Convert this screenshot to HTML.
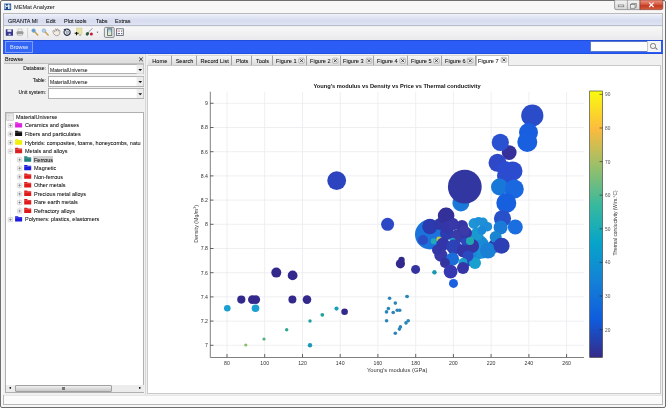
<!DOCTYPE html>
<html><head><meta charset="utf-8">
<style>
*{margin:0;padding:0;box-sizing:border-box}
html,body{width:666px;height:408px;overflow:hidden;background:#fff}
body{position:relative;font-family:"Liberation Sans",sans-serif;font-size:5.5px;color:#1a1a1a}
.a{position:absolute}
.plot{position:absolute;left:0;top:0}
.t{position:absolute;white-space:nowrap;line-height:8px;will-change:transform;-webkit-text-stroke-width:0.05px;color:#0a0a0a}
</style></head><body>
<!-- window frame -->
<div class="a" style="left:0;top:0;width:666px;height:408px;background:#f7f7f7;border:1px solid #6e6e6e;border-radius:2px"></div>
<!-- title -->
<div class="t" style="left:14px;top:3.2px;font-size:5.6px;color:#2a2a2a">MEMat Analyzer</div>
<!-- window buttons -->
<svg class="a" style="left:0;top:0" width="666" height="14" viewBox="0 0 666 14">
<defs><linearGradient id="wb" x1="0" y1="0" x2="0" y2="1"><stop offset="0" stop-color="#f6f6f6"/><stop offset="0.5" stop-color="#e6e6e6"/><stop offset="1" stop-color="#d6d6d6"/></linearGradient>
<linearGradient id="cb" x1="0" y1="0" x2="0" y2="1"><stop offset="0" stop-color="#ee9a88"/><stop offset="0.45" stop-color="#d65a44"/><stop offset="0.6" stop-color="#c23a22"/><stop offset="1" stop-color="#d8603c"/></linearGradient></defs>
<path d="M614.6 0 V8 Q614.6 9.6 616.2 9.6 H640 V0 Z" fill="url(#wb)" stroke="#7a7a7a" stroke-width="0.7"/>
<line x1="627.4" y1="0" x2="627.4" y2="9.6" stroke="#7a7a7a" stroke-width="0.6"/>
<path d="M640 0 V9.6 H661.2 Q662.8 9.6 662.8 8 V0 Z" fill="url(#cb)" stroke="#8a3a2a" stroke-width="0.7"/>
<rect x="618.2" y="5" width="5.6" height="1.8" fill="#f4f4f4" stroke="#666" stroke-width="0.6"/>
<rect x="631.8" y="3.6" width="4.4" height="3.6" fill="none" stroke="#666" stroke-width="0.6"/>
<rect x="630.6" y="4.6" width="4.4" height="3.6" fill="#eee" stroke="#666" stroke-width="0.6"/>
<path d="M649.2 2.6 L653.6 7 M653.6 2.6 L649.2 7" stroke="#fff" stroke-width="1.1"/>
</svg>
<!-- inner border -->
<div class="a" style="left:3px;top:13px;width:660px;height:392px;border:1px solid #b9b9b9;background:#f0f0f0"></div>
<!-- menubar -->
<div class="a" style="left:4px;top:14px;width:658px;height:12px;background:linear-gradient(#eef1fa,#d7dcef 55%,#dfe4f3);border-bottom:1px solid #b8bccc"></div>
<div class="t" style="left:8px;top:16.5px">GRANTA MI</div>
<div class="t" style="left:45.8px;top:16.5px">Edit</div>
<div class="t" style="left:63.5px;top:16.5px">Plot tools</div>
<div class="t" style="left:95.6px;top:16.5px">Tabs</div>
<div class="t" style="left:114.6px;top:16.5px">Extras</div>
<!-- toolbar -->
<div class="a" style="left:4px;top:27px;width:658px;height:13px;background:linear-gradient(#f7f7f7,#eaeaee)"></div>
<svg class="a" style="left:0;top:0" width="130" height="40" viewBox="0 0 130 40">
<!-- save -->
<rect x="5.8" y="29.2" width="7.2" height="6.6" rx="0.6" fill="#35388c"/>
<rect x="7.4" y="29.4" width="4" height="2.4" fill="#e8e8f4"/>
<rect x="8.6" y="33.6" width="2" height="1.6" fill="#c8c8e0"/>
<!-- print -->
<rect x="18" y="29" width="4" height="2.5" fill="#f4f4f4" stroke="#999" stroke-width="0.4"/>
<rect x="16.6" y="31.2" width="6.8" height="3.2" rx="1" fill="#9a9a9a"/>
<rect x="17.6" y="33.8" width="4.8" height="1.6" fill="#d8d8d8" stroke="#888" stroke-width="0.3"/>
<line x1="27.6" y1="28" x2="27.6" y2="38" stroke="#c4c4c4" stroke-width="0.7"/>
<!-- zoom in -->
<line x1="34.5" y1="31.5" x2="38.2" y2="35.4" stroke="#c8a040" stroke-width="1.4"/>
<circle cx="33.6" cy="30.6" r="1.8" fill="#5aa0e0" stroke="#7890a8" stroke-width="0.5"/>
<!-- zoom out -->
<line x1="44.8" y1="31.5" x2="48.6" y2="35.4" stroke="#c8a040" stroke-width="1.4"/>
<circle cx="43.9" cy="30.6" r="1.9" fill="#a8d0f0" stroke="#8aa0b8" stroke-width="0.5"/>
<!-- pan hand -->
<path d="M53.4 33.2 L52.8 31.2 Q52.9 30.2 54 30.7 L54.9 31.8 L55 29.4 Q55.6 28.5 56.3 29.3 L56.6 31 L57 29 Q57.8 28.4 58.3 29.3 L58.4 31.3 L59.1 30.3 Q59.9 30 60 30.9 L59.7 33.4 Q59.2 35.8 56.6 35.8 Q54.5 35.8 53.4 33.2 Z" fill="#f4ece2" stroke="#707070" stroke-width="0.55"/>
<!-- rotate -->
<path d="M64.6 30.4 A3.1 3.1 0 1 0 66.4 29.2" fill="none" stroke="#2a3450" stroke-width="1.15"/>
<path d="M63.4 29.2 L66.6 28.4 L65.6 31.2 Z" fill="#2a3450"/>
<rect x="66" y="31" width="2.6" height="2.4" fill="#b8bcc8" stroke="#606878" stroke-width="0.35"/>
<!-- data cursor -->
<rect x="76.6" y="28" width="5.4" height="6.2" fill="#e8e4a8" stroke="#c8c080" stroke-width="0.4"/>
<path d="M74.6 33.3 H78.6 M76.5 32 V35.2" stroke="#111" stroke-width="1.1"/>
<path d="M79.2 35.2 H81" stroke="#444" stroke-width="0.5"/>
<!-- brush -->
<line x1="88.6" y1="31.8" x2="92.6" y2="28.4" stroke="#8890a8" stroke-width="0.9"/>
<ellipse cx="87.4" cy="33.8" rx="1.5" ry="1.9" transform="rotate(40 87.4 33.8)" fill="#2e5a38"/>
<circle cx="91.4" cy="34" r="1.5" fill="#c81838"/>
<path d="M96.6 31.8 L98.4 31.8 L97.5 33 Z" fill="#444"/>
<!-- toggle -->
<defs><linearGradient id="tg" x1="0" y1="0" x2="0" y2="1"><stop offset="0" stop-color="#88b8e0"/><stop offset="0.6" stop-color="#d8e8d8"/><stop offset="1" stop-color="#f0f0c0"/></linearGradient></defs>
<rect x="104.4" y="27.4" width="9.8" height="10" rx="1.2" fill="#e6ecf2" stroke="#707070" stroke-width="0.8"/>
<rect x="107.6" y="28.8" width="4.2" height="6.6" fill="url(#tg)" stroke="#4e5e56" stroke-width="0.8"/>
<!-- legend -->
<rect x="116.5" y="28.8" width="6.8" height="6.6" fill="#fafafa" stroke="#585e66" stroke-width="0.8"/>
<rect x="117.6" y="30.6" width="2.4" height="0.9" fill="#c86078"/><rect x="121" y="30.6" width="1.2" height="0.9" fill="#404858"/>
<rect x="117.6" y="33.2" width="2.4" height="0.9" fill="#4050a8"/><rect x="121" y="33.2" width="1.2" height="0.9" fill="#404878"/>
<!-- app icon -->
<rect x="4.2" y="3.6" width="6.9" height="6.5" fill="#1a4c94"/>
<path d="M5.2 9 L5.2 4.6 L6.9 7 L8.5 4.6 L8.5 9 M9.8 4.6 L9.8 9" fill="none" stroke="#fff" stroke-width="0.9"/>
</svg>
<!-- blue bar -->
<div class="a" style="left:3px;top:39.5px;width:660px;height:14.3px;background:#2b5cf5;border-top:1px solid #1f4cd8;border-bottom:1px solid #2250e0"></div>
<div class="a" style="left:5px;top:41px;width:27.5px;height:11.5px;background:#3366f6;border:0.8px solid #7f9ef7"></div>
<div class="t" style="left:9.6px;top:43.2px;color:#d4e0ff">Browse</div>
<!-- search -->
<div class="a" style="left:590px;top:40.8px;width:71px;height:11.7px;background:#fff;border:0.8px solid #5a78c8"></div>
<div class="a" style="left:646.5px;top:41.3px;width:14px;height:10.7px;background:#f4f4f4;border-left:0.6px solid #c8c8c8"></div>
<div class="a" style="left:650px;top:43px;width:5.5px;height:5.5px;border:0.8px solid #777;border-radius:50%"></div>
<div class="a" style="left:654.5px;top:48px;width:2.5px;height:0.9px;background:#777;transform:rotate(45deg)"></div>
<!-- left panel -->
<div class="a" style="left:3px;top:54px;width:143px;height:340.5px;background:#f0f0f0;border-right:0.8px solid #d8d8d8"></div>
<div class="a" style="left:4px;top:54px;width:140px;height:9.5px;background:linear-gradient(#eaeaea,#dcdcdc);border-bottom:0.6px solid #c0c0c0"></div>
<div class="t" style="left:5px;top:54.7px">Browse</div>
<!-- combos -->
<div class="t" style="left:16px;top:63.9px;width:30px;text-align:right;font-size:5px">Database:</div>
<div class="t" style="left:16px;top:75.9px;width:30px;text-align:right;font-size:5px">Table:</div>
<div class="t" style="left:6px;top:87.6px;width:40px;text-align:right;font-size:5px">Unit system:</div>
<div class="a" style="left:48px;top:64px;width:96px;height:10.4px;background:#fff;border:0.6px solid #b0b0b0"></div>
<div class="t" style="left:49.8px;top:66.1px;font-size:5px;color:#222">MaterialUniverse</div>
<div class="a" style="left:48px;top:76.2px;width:96px;height:10.4px;background:#fff;border:0.6px solid #b0b0b0"></div>
<div class="t" style="left:49.8px;top:78.2px;font-size:5px;color:#222">MaterialUniverse</div>
<div class="a" style="left:48px;top:88.4px;width:96px;height:10.2px;background:#fff;border:0.6px solid #b0b0b0"></div>
<svg class="a" style="left:0;top:0" width="150" height="100" viewBox="0 0 150 100">
<rect x="136.6" y="64.6" width="6.8" height="9.2" fill="#ececec"/>
<rect x="136.6" y="76.8" width="6.8" height="9.2" fill="#ececec"/>
<rect x="136.6" y="89" width="6.8" height="9" fill="#ececec"/>
<path d="M138.3 68.9 h3.8 l-1.9 2 z M138.3 81.1 h3.8 l-1.9 2 z M138.3 93.2 h3.8 l-1.9 2 z" fill="#111"/>
<path d="M139.2 57.5 L142.8 61.1 M142.8 57.5 L139.2 61.1" stroke="#222" stroke-width="0.9"/>
</svg>
<!-- tree -->
<div class="a" style="left:5px;top:111.9px;width:139.4px;height:281px;background:#fff;border:0.7px solid #b0b0b0"></div>
<svg class="a" style="left:0;top:0" width="150" height="240" viewBox="0 0 150 240"><path d="M10.4 129 V219.6 M19.6 161.8 V211.1" stroke="#d0d0d0" stroke-width="0.5" stroke-dasharray="0.6 0.6"/><rect x="6.3" y="113.60" width="7" height="6.6" fill="#ececec" stroke="#b0b0b0" stroke-width="0.5"/><path d="M6.3 115.60 H13.3 M8.8 113.60 V120.20" stroke="#c8c8c8" stroke-width="0.4"/><rect x="8.20" y="123.45" width="4.4" height="4.2" rx="0.6" fill="#fafafa" stroke="#b8b8b8" stroke-width="0.5"/><path d="M9.10 125.55 H11.70" stroke="#505050" stroke-width="0.5"/><path d="M10.40 124.25 V126.85" stroke="#505050" stroke-width="0.5"/><path d="M15.10 122.15 h2.8 l0.8 0.8 h3.4 v4.6 h-7 z" fill="#e020e0"/><path d="M15.10 123.75 h7" stroke="rgba(255,255,255,0.35)" stroke-width="0.6"/><rect x="8.20" y="132.00" width="4.4" height="4.2" rx="0.6" fill="#fafafa" stroke="#b8b8b8" stroke-width="0.5"/><path d="M9.10 134.10 H11.70" stroke="#505050" stroke-width="0.5"/><path d="M10.40 132.80 V135.40" stroke="#505050" stroke-width="0.5"/><path d="M15.10 130.70 h2.8 l0.8 0.8 h3.4 v4.6 h-7 z" fill="#101010"/><path d="M15.10 132.30 h7" stroke="rgba(255,255,255,0.35)" stroke-width="0.6"/><rect x="8.20" y="140.55" width="4.4" height="4.2" rx="0.6" fill="#fafafa" stroke="#b8b8b8" stroke-width="0.5"/><path d="M9.10 142.65 H11.70" stroke="#505050" stroke-width="0.5"/><path d="M10.40 141.35 V143.95" stroke="#505050" stroke-width="0.5"/><path d="M15.10 139.25 h2.8 l0.8 0.8 h3.4 v4.6 h-7 z" fill="#f0f000"/><path d="M15.10 140.85 h7" stroke="rgba(255,255,255,0.35)" stroke-width="0.6"/><rect x="8.20" y="149.10" width="4.4" height="4.2" rx="0.6" fill="#fafafa" stroke="#b8b8b8" stroke-width="0.5"/><path d="M9.10 151.20 H11.70" stroke="#505050" stroke-width="0.5"/><path d="M15.10 147.80 h2.8 l0.8 0.8 h3.4 v4.6 h-7 z" fill="#d82020"/><path d="M15.10 149.40 h7" stroke="rgba(255,255,255,0.35)" stroke-width="0.6"/><rect x="17.40" y="157.65" width="4.4" height="4.2" rx="0.6" fill="#fafafa" stroke="#b8b8b8" stroke-width="0.5"/><path d="M18.30 159.75 H20.90" stroke="#505050" stroke-width="0.5"/><path d="M19.60 158.45 V161.05" stroke="#505050" stroke-width="0.5"/><path d="M24.20 156.35 h2.8 l0.8 0.8 h3.4 v4.6 h-7 z" fill="#208080"/><path d="M24.20 157.95 h7" stroke="rgba(255,255,255,0.35)" stroke-width="0.6"/><rect x="17.40" y="166.20" width="4.4" height="4.2" rx="0.6" fill="#fafafa" stroke="#b8b8b8" stroke-width="0.5"/><path d="M18.30 168.30 H20.90" stroke="#505050" stroke-width="0.5"/><path d="M19.60 167.00 V169.60" stroke="#505050" stroke-width="0.5"/><path d="M24.20 164.90 h2.8 l0.8 0.8 h3.4 v4.6 h-7 z" fill="#1a1ae0"/><path d="M24.20 166.50 h7" stroke="rgba(255,255,255,0.35)" stroke-width="0.6"/><rect x="17.40" y="174.75" width="4.4" height="4.2" rx="0.6" fill="#fafafa" stroke="#b8b8b8" stroke-width="0.5"/><path d="M18.30 176.85 H20.90" stroke="#505050" stroke-width="0.5"/><path d="M19.60 175.55 V178.15" stroke="#505050" stroke-width="0.5"/><path d="M24.20 173.45 h2.8 l0.8 0.8 h3.4 v4.6 h-7 z" fill="#e01818"/><path d="M24.20 175.05 h7" stroke="rgba(255,255,255,0.35)" stroke-width="0.6"/><rect x="17.40" y="183.30" width="4.4" height="4.2" rx="0.6" fill="#fafafa" stroke="#b8b8b8" stroke-width="0.5"/><path d="M18.30 185.40 H20.90" stroke="#505050" stroke-width="0.5"/><path d="M19.60 184.10 V186.70" stroke="#505050" stroke-width="0.5"/><path d="M24.20 182.00 h2.8 l0.8 0.8 h3.4 v4.6 h-7 z" fill="#e01818"/><path d="M24.20 183.60 h7" stroke="rgba(255,255,255,0.35)" stroke-width="0.6"/><rect x="17.40" y="191.85" width="4.4" height="4.2" rx="0.6" fill="#fafafa" stroke="#b8b8b8" stroke-width="0.5"/><path d="M18.30 193.95 H20.90" stroke="#505050" stroke-width="0.5"/><path d="M19.60 192.65 V195.25" stroke="#505050" stroke-width="0.5"/><path d="M24.20 190.55 h2.8 l0.8 0.8 h3.4 v4.6 h-7 z" fill="#e01818"/><path d="M24.20 192.15 h7" stroke="rgba(255,255,255,0.35)" stroke-width="0.6"/><rect x="17.40" y="200.40" width="4.4" height="4.2" rx="0.6" fill="#fafafa" stroke="#b8b8b8" stroke-width="0.5"/><path d="M18.30 202.50 H20.90" stroke="#505050" stroke-width="0.5"/><path d="M19.60 201.20 V203.80" stroke="#505050" stroke-width="0.5"/><path d="M24.20 199.10 h2.8 l0.8 0.8 h3.4 v4.6 h-7 z" fill="#e01818"/><path d="M24.20 200.70 h7" stroke="rgba(255,255,255,0.35)" stroke-width="0.6"/><rect x="17.40" y="208.95" width="4.4" height="4.2" rx="0.6" fill="#fafafa" stroke="#b8b8b8" stroke-width="0.5"/><path d="M18.30 211.05 H20.90" stroke="#505050" stroke-width="0.5"/><path d="M19.60 209.75 V212.35" stroke="#505050" stroke-width="0.5"/><path d="M24.20 207.65 h2.8 l0.8 0.8 h3.4 v4.6 h-7 z" fill="#e01818"/><path d="M24.20 209.25 h7" stroke="rgba(255,255,255,0.35)" stroke-width="0.6"/><rect x="8.20" y="217.50" width="4.4" height="4.2" rx="0.6" fill="#fafafa" stroke="#b8b8b8" stroke-width="0.5"/><path d="M9.10 219.60 H11.70" stroke="#505050" stroke-width="0.5"/><path d="M10.40 218.30 V220.90" stroke="#505050" stroke-width="0.5"/><path d="M15.10 216.20 h2.8 l0.8 0.8 h3.4 v4.6 h-7 z" fill="#1a1ae0"/><path d="M15.10 217.80 h7" stroke="rgba(255,255,255,0.35)" stroke-width="0.6"/></svg><div class="t" style="left:16px;top:112.8px">MaterialUniverse</div><div class="t" style="left:24.6px;top:121.3px">Ceramics and glasses</div><div class="t" style="left:24.6px;top:129.9px">Fibers and particulates</div><div class="t" style="left:24.6px;top:138.5px">Hybrids: composites, foams, honeycombs, natu</div><div class="t" style="left:24.6px;top:147.0px">Metals and alloys</div><div class="a" style="left:33.0px;top:156.1px;width:20px;height:7.4px;background:#d2d2d2"></div><div class="t" style="left:34.0px;top:155.6px">Ferrous</div><div class="t" style="left:34.0px;top:164.1px">Magnetic</div><div class="t" style="left:34.0px;top:172.7px">Non-ferrous</div><div class="t" style="left:34.0px;top:181.2px">Other metals</div><div class="t" style="left:34.0px;top:189.8px">Precious metal alloys</div><div class="t" style="left:34.0px;top:198.3px">Rare earth metals</div><div class="t" style="left:34.0px;top:206.9px">Refractory alloys</div><div class="t" style="left:24.6px;top:215.4px">Polymers: plastics, elastomers</div>
<!-- tree scrollbar -->
<div class="a" style="left:6px;top:384.5px;width:137.5px;height:7.5px;background:#ececec"></div>
<div class="a" style="left:14.5px;top:385px;width:97px;height:6.8px;background:linear-gradient(#f0f0f0,#c8c8c8);border:0.6px solid #a0a0a0;border-radius:1px"></div>
<div class="a" style="left:61.5px;top:386.8px;width:3.2px;height:3.2px;background:repeating-linear-gradient(90deg,#777 0 0.6px,transparent 0.6px 1.1px)"></div>
<div class="t" style="left:8.5px;top:384px;font-size:4px">◂</div>
<div class="t" style="left:138.5px;top:384px;font-size:4px">▸</div>
<!-- tabs -->
<div class="a" style="left:147.3px;top:65px;width:514px;height:329px;background:#fff;border:0.7px solid #cacaca"></div>
<div class="a" style="left:4px;top:394.6px;width:658px;height:9.6px;background:#fbfbfb;border-top:0.6px solid #e6e6e6"></div>
<div class="a" style="left:148.0px;top:55.4px;width:23.6px;height:9.6px;background:linear-gradient(#f6f6f6,#dcdcdc);border-top:0.6px solid #d8d8d8;border-right:0.8px solid #a4a4a4"></div><div class="t" style="left:148.0px;top:57.4px;width:23.6px;text-align:center;font-size:5.6px">Home</div><div class="a" style="left:171.6px;top:55.4px;width:25.0px;height:9.6px;background:linear-gradient(#f6f6f6,#dcdcdc);border-top:0.6px solid #d8d8d8;border-right:0.8px solid #a4a4a4"></div><div class="t" style="left:171.6px;top:57.4px;width:25.0px;text-align:center;font-size:5.6px">Search</div><div class="a" style="left:196.6px;top:55.4px;width:35.2px;height:9.6px;background:linear-gradient(#f6f6f6,#dcdcdc);border-top:0.6px solid #d8d8d8;border-right:0.8px solid #a4a4a4"></div><div class="t" style="left:196.6px;top:57.4px;width:35.2px;text-align:center;font-size:5.6px">Record List</div><div class="a" style="left:231.8px;top:55.4px;width:20.4px;height:9.6px;background:linear-gradient(#f6f6f6,#dcdcdc);border-top:0.6px solid #d8d8d8;border-right:0.8px solid #a4a4a4"></div><div class="t" style="left:231.8px;top:57.4px;width:20.4px;text-align:center;font-size:5.6px">Plots</div><div class="a" style="left:252.2px;top:55.4px;width:21.0px;height:9.6px;background:linear-gradient(#f6f6f6,#dcdcdc);border-top:0.6px solid #d8d8d8;border-right:0.8px solid #a4a4a4"></div><div class="t" style="left:252.2px;top:57.4px;width:21.0px;text-align:center;font-size:5.6px">Tools</div><div class="a" style="left:273.2px;top:55.4px;width:33.7px;height:9.6px;background:linear-gradient(#f6f6f6,#dcdcdc);border-top:0.6px solid #d8d8d8;border-right:0.8px solid #a4a4a4"></div><div class="t" style="left:275.8px;top:57.4px;font-size:5.6px">Figure 1</div><div class="a" style="left:306.9px;top:55.4px;width:33.7px;height:9.6px;background:linear-gradient(#f6f6f6,#dcdcdc);border-top:0.6px solid #d8d8d8;border-right:0.8px solid #a4a4a4"></div><div class="t" style="left:309.5px;top:57.4px;font-size:5.6px">Figure 2</div><div class="a" style="left:340.7px;top:55.4px;width:33.7px;height:9.6px;background:linear-gradient(#f6f6f6,#dcdcdc);border-top:0.6px solid #d8d8d8;border-right:0.8px solid #a4a4a4"></div><div class="t" style="left:343.3px;top:57.4px;font-size:5.6px">Figure 3</div><div class="a" style="left:374.4px;top:55.4px;width:33.7px;height:9.6px;background:linear-gradient(#f6f6f6,#dcdcdc);border-top:0.6px solid #d8d8d8;border-right:0.8px solid #a4a4a4"></div><div class="t" style="left:377.0px;top:57.4px;font-size:5.6px">Figure 4</div><div class="a" style="left:408.1px;top:55.4px;width:33.7px;height:9.6px;background:linear-gradient(#f6f6f6,#dcdcdc);border-top:0.6px solid #d8d8d8;border-right:0.8px solid #a4a4a4"></div><div class="t" style="left:410.7px;top:57.4px;font-size:5.6px">Figure 5</div><div class="a" style="left:441.9px;top:55.4px;width:33.7px;height:9.6px;background:linear-gradient(#f6f6f6,#dcdcdc);border-top:0.6px solid #d8d8d8;border-right:0.8px solid #a4a4a4"></div><div class="t" style="left:444.5px;top:57.4px;font-size:5.6px">Figure 6</div><div class="a" style="left:475.6px;top:54.6px;width:33.7px;height:11px;background:#fff;border:0.7px solid #c0c0c0;border-bottom:none"></div><div class="t" style="left:478.2px;top:56.6px;font-size:5.6px">Figure 7</div><svg class="a" style="left:0;top:0" width="666" height="70" viewBox="0 0 666 70"><rect x="298.73" y="58.10" width="5.6" height="5.2" rx="1" fill="#f4f4f4" stroke="#9a9a9a" stroke-width="0.6"/><path d="M300.03 59.20 L303.03 62.20 M303.03 59.20 L300.03 62.20" stroke="#1a1a1a" stroke-width="0.8"/><rect x="332.46" y="58.10" width="5.6" height="5.2" rx="1" fill="#f4f4f4" stroke="#9a9a9a" stroke-width="0.6"/><path d="M333.76 59.20 L336.76 62.20 M336.76 59.20 L333.76 62.20" stroke="#1a1a1a" stroke-width="0.8"/><rect x="366.19" y="58.10" width="5.6" height="5.2" rx="1" fill="#f4f4f4" stroke="#9a9a9a" stroke-width="0.6"/><path d="M367.49 59.20 L370.49 62.20 M370.49 59.20 L367.49 62.20" stroke="#1a1a1a" stroke-width="0.8"/><rect x="399.92" y="58.10" width="5.6" height="5.2" rx="1" fill="#f4f4f4" stroke="#9a9a9a" stroke-width="0.6"/><path d="M401.22 59.20 L404.22 62.20 M404.22 59.20 L401.22 62.20" stroke="#1a1a1a" stroke-width="0.8"/><rect x="433.65" y="58.10" width="5.6" height="5.2" rx="1" fill="#f4f4f4" stroke="#9a9a9a" stroke-width="0.6"/><path d="M434.95 59.20 L437.95 62.20 M437.95 59.20 L434.95 62.20" stroke="#1a1a1a" stroke-width="0.8"/><rect x="467.38" y="58.10" width="5.6" height="5.2" rx="1" fill="#f4f4f4" stroke="#9a9a9a" stroke-width="0.6"/><path d="M468.68 59.20 L471.68 62.20 M471.68 59.20 L468.68 62.20" stroke="#1a1a1a" stroke-width="0.8"/><rect x="501.11" y="57.30" width="5.6" height="5.2" rx="1" fill="#f4f4f4" stroke="#9a9a9a" stroke-width="0.6"/><path d="M502.41 58.40 L505.41 61.40 M505.41 58.40 L502.41 61.40" stroke="#1a1a1a" stroke-width="0.8"/></svg>
<svg class="plot" width="666" height="408" viewBox="0 0 666 408">
<defs><linearGradient id="parula" x1="0" y1="1" x2="0" y2="0">
<stop offset="0" stop-color="#352a87"/><stop offset="0.143" stop-color="#0f5cdd"/><stop offset="0.286" stop-color="#1481d6"/>
<stop offset="0.429" stop-color="#06a4ca"/><stop offset="0.571" stop-color="#37b99e"/><stop offset="0.714" stop-color="#97bf6b"/>
<stop offset="0.857" stop-color="#fcbb3e"/><stop offset="1" stop-color="#f9fb0e"/></linearGradient></defs>
<g stroke="#eaeaee" stroke-width="0.75"><line x1="227.0" y1="91.7" x2="227.0" y2="357.5" /><line x1="264.7" y1="91.7" x2="264.7" y2="357.5" /><line x1="302.5" y1="91.7" x2="302.5" y2="357.5" /><line x1="340.2" y1="91.7" x2="340.2" y2="357.5" /><line x1="377.9" y1="91.7" x2="377.9" y2="357.5" /><line x1="415.7" y1="91.7" x2="415.7" y2="357.5" /><line x1="453.4" y1="91.7" x2="453.4" y2="357.5" /><line x1="491.1" y1="91.7" x2="491.1" y2="357.5" /><line x1="528.9" y1="91.7" x2="528.9" y2="357.5" /><line x1="566.6" y1="91.7" x2="566.6" y2="357.5" /><line x1="210" y1="345.3" x2="584" y2="345.3" /><line x1="210" y1="321.1" x2="584" y2="321.1" /><line x1="210" y1="296.9" x2="584" y2="296.9" /><line x1="210" y1="272.7" x2="584" y2="272.7" /><line x1="210" y1="248.5" x2="584" y2="248.5" /><line x1="210" y1="224.3" x2="584" y2="224.3" /><line x1="210" y1="200.1" x2="584" y2="200.1" /><line x1="210" y1="175.9" x2="584" y2="175.9" /><line x1="210" y1="151.7" x2="584" y2="151.7" /><line x1="210" y1="127.5" x2="584" y2="127.5" /><line x1="210" y1="103.3" x2="584" y2="103.3" /></g>
<circle cx="227.3" cy="308.3" r="3.3" fill="#1aa0d2"/><circle cx="241.3" cy="299.6" r="4.1" fill="#33298c"/><circle cx="252.3" cy="299.6" r="4.3" fill="#33298c"/><circle cx="255.8" cy="299.6" r="4.3" fill="#33298c"/><circle cx="255.5" cy="308.3" r="3.8" fill="#1aa0d2"/><circle cx="292.4" cy="299.6" r="4.0" fill="#33298c"/><circle cx="307.0" cy="299.6" r="4.3" fill="#33298c"/><circle cx="245.8" cy="345.0" r="1.6" fill="#8cbc62"/><circle cx="264.0" cy="339.0" r="1.6" fill="#4fae7a"/><circle cx="286.7" cy="329.8" r="1.7" fill="#2fa88c"/><circle cx="310.0" cy="321.0" r="1.7" fill="#1fa0a0"/><circle cx="310.0" cy="345.2" r="2.2" fill="#1a9ab8"/><circle cx="322.3" cy="314.8" r="1.9" fill="#22a39a"/><circle cx="336.5" cy="308.6" r="2.1" fill="#18a0b8"/><circle cx="344.6" cy="311.8" r="3.3" fill="#33298c"/><circle cx="276.3" cy="272.6" r="5.0" fill="#33298c"/><circle cx="292.6" cy="275.4" r="4.9" fill="#33298c"/><circle cx="336.7" cy="180.6" r="9.4" fill="#2c44c0"/><circle cx="387.6" cy="224.3" r="6.5" fill="#2c48c4"/><circle cx="401.5" cy="260.0" r="3.2" fill="#33298c"/><circle cx="400.4" cy="263.8" r="4.6" fill="#33298c"/><circle cx="415.6" cy="269.4" r="4.5" fill="#3533a0"/><circle cx="434.6" cy="272.4" r="2.1" fill="#1a9ab0"/><circle cx="389.6" cy="298.2" r="1.8" fill="#2a86b8"/><circle cx="407.2" cy="296.5" r="1.8" fill="#2a86b8"/><circle cx="395.3" cy="303.1" r="1.8" fill="#2a86b8"/><circle cx="388.4" cy="308.5" r="1.8" fill="#2a86b8"/><circle cx="386.5" cy="311.9" r="1.8" fill="#2a86b8"/><circle cx="393.2" cy="312.5" r="1.8" fill="#2a86b8"/><circle cx="397.2" cy="310.3" r="1.8" fill="#2a86b8"/><circle cx="399.7" cy="310.3" r="1.8" fill="#2a86b8"/><circle cx="386.6" cy="320.7" r="1.8" fill="#2a86b8"/><circle cx="406.0" cy="322.9" r="1.8" fill="#2a86b8"/><circle cx="408.2" cy="320.7" r="1.8" fill="#2a86b8"/><circle cx="400.4" cy="326.9" r="1.8" fill="#2a86b8"/><circle cx="399.4" cy="329.1" r="1.8" fill="#2a86b8"/><circle cx="395.3" cy="333.2" r="1.8" fill="#2a86b8"/><circle cx="406.7" cy="296.5" r="1.4" fill="#2a86b8"/><circle cx="430.0" cy="234.5" r="15.0" fill="#1a74dc"/><circle cx="477.0" cy="247.0" r="12.5" fill="#1a8ad6"/><circle cx="477.0" cy="234.0" r="6.5" fill="#1a98d0"/><circle cx="429.9" cy="226.5" r="7.7" fill="#2c3ab0"/><circle cx="423.0" cy="240.0" r="5.0" fill="#2a4cc4"/><circle cx="433.7" cy="241.3" r="3.0" fill="#22a8b8"/><circle cx="439.0" cy="239.0" r="2.6" fill="#c8c848"/><circle cx="440.0" cy="224.0" r="6.0" fill="#3038a8"/><circle cx="446.1" cy="215.8" r="8.3" fill="#35309a"/><circle cx="452.6" cy="223.7" r="6.0" fill="#3436a8"/><circle cx="447.0" cy="233.0" r="7.0" fill="#2c3cb0"/><circle cx="443.1" cy="244.1" r="6.6" fill="#3236a8"/><circle cx="440.9" cy="255.2" r="6.6" fill="#3838a8"/><circle cx="458.0" cy="236.0" r="7.0" fill="#3a3aa8"/><circle cx="452.6" cy="240.8" r="3.0" fill="#1aa0c0"/><circle cx="466.0" cy="233.0" r="6.0" fill="#3535a5"/><circle cx="454.0" cy="247.0" r="7.5" fill="#2e42b8"/><circle cx="452.5" cy="259.0" r="6.6" fill="#1a6cd8"/><circle cx="463.4" cy="250.7" r="6.7" fill="#3236a8"/><circle cx="445.0" cy="263.0" r="5.0" fill="#3434a0"/><circle cx="462.0" cy="226.0" r="6.0" fill="#3535a5"/><circle cx="447.0" cy="227.0" r="6.0" fill="#3436a8"/><circle cx="453.4" cy="224.6" r="5.4" fill="#3838a8"/><circle cx="464.2" cy="230.5" r="5.4" fill="#3a3aa8"/><circle cx="437.0" cy="250.0" r="5.0" fill="#3436a8"/><circle cx="467.0" cy="262.0" r="5.0" fill="#2c48c0"/><circle cx="474.0" cy="223.5" r="5.4" fill="#1e94d6"/><circle cx="478.5" cy="221.0" r="4.0" fill="#1e90d8"/><circle cx="483.0" cy="222.3" r="4.8" fill="#1e90d8"/><circle cx="487.4" cy="226.7" r="4.8" fill="#1e8cd8"/><circle cx="482.8" cy="251.8" r="6.6" fill="#1a90d8"/><circle cx="475.0" cy="263.0" r="6.0" fill="#18a0d0"/><circle cx="472.0" cy="246.0" r="7.0" fill="#3535a5"/><circle cx="468.0" cy="256.0" r="5.5" fill="#2a48c0"/><circle cx="463.0" cy="262.5" r="4.5" fill="#1aa0c8"/><circle cx="463.0" cy="268.0" r="6.0" fill="#3535a8"/><circle cx="450.6" cy="271.7" r="6.9" fill="#3538b0"/><circle cx="453.5" cy="283.4" r="4.5" fill="#1a60e0"/><circle cx="434.3" cy="272.3" r="2.0" fill="#1a9ab0"/><circle cx="465.0" cy="241.5" r="4.0" fill="#2a48c0"/><circle cx="470.0" cy="241.0" r="4.0" fill="#20a8b0"/><circle cx="495.2" cy="245.7" r="7.0" fill="#2a3db0"/><circle cx="482.0" cy="230.0" r="4.5" fill="#1a8ad8"/><circle cx="488.0" cy="250.6" r="8.0" fill="#1a80d5"/><circle cx="509.2" cy="152.6" r="7.4" fill="#35309a"/><circle cx="500.3" cy="142.4" r="8.6" fill="#2a52d0"/><circle cx="497.5" cy="162.8" r="9.0" fill="#2e48c8"/><circle cx="505.0" cy="169.0" r="8.0" fill="#2c4cd0"/><circle cx="505.0" cy="176.0" r="8.0" fill="#2c4cd0"/><circle cx="513.0" cy="171.0" r="9.5" fill="#2c4cd0"/><circle cx="499.5" cy="187.0" r="8.5" fill="#1878d8"/><circle cx="514.3" cy="189.0" r="9.5" fill="#1a68e0"/><circle cx="506.3" cy="203.0" r="10.0" fill="#1660e0"/><circle cx="502.5" cy="218.5" r="8.6" fill="#2850c8"/><circle cx="515.3" cy="227.0" r="7.5" fill="#1a6ee0"/><circle cx="500.6" cy="227.5" r="7.0" fill="#1a7ad8"/><circle cx="495.7" cy="236.9" r="6.0" fill="#1a85d0"/><circle cx="501.6" cy="245.7" r="8.0" fill="#2c3fb5"/><circle cx="532.3" cy="115.5" r="11.1" fill="#2a4cc8"/><circle cx="528.5" cy="132.5" r="9.5" fill="#1a5ee0"/><circle cx="527.3" cy="142.0" r="10.0" fill="#1860e0"/><circle cx="460.9" cy="203.0" r="8.5" fill="#1a78d8"/><circle cx="464.8" cy="186.7" r="16.9" fill="#3236a0"/><circle cx="446.3" cy="214.2" r="6.5" fill="#33309a"/>
<g stroke="#262626" stroke-width="0.7"><line x1="227.0" y1="357.5" x2="227.0" y2="354" /><line x1="264.7" y1="357.5" x2="264.7" y2="354" /><line x1="302.5" y1="357.5" x2="302.5" y2="354" /><line x1="340.2" y1="357.5" x2="340.2" y2="354" /><line x1="377.9" y1="357.5" x2="377.9" y2="354" /><line x1="415.7" y1="357.5" x2="415.7" y2="354" /><line x1="453.4" y1="357.5" x2="453.4" y2="354" /><line x1="491.1" y1="357.5" x2="491.1" y2="354" /><line x1="528.9" y1="357.5" x2="528.9" y2="354" /><line x1="566.6" y1="357.5" x2="566.6" y2="354" /><line x1="210" y1="345.3" x2="213.5" y2="345.3" /><line x1="210" y1="321.1" x2="213.5" y2="321.1" /><line x1="210" y1="296.9" x2="213.5" y2="296.9" /><line x1="210" y1="272.7" x2="213.5" y2="272.7" /><line x1="210" y1="248.5" x2="213.5" y2="248.5" /><line x1="210" y1="224.3" x2="213.5" y2="224.3" /><line x1="210" y1="200.1" x2="213.5" y2="200.1" /><line x1="210" y1="175.9" x2="213.5" y2="175.9" /><line x1="210" y1="151.7" x2="213.5" y2="151.7" /><line x1="210" y1="127.5" x2="213.5" y2="127.5" /><line x1="210" y1="103.3" x2="213.5" y2="103.3" /></g>
<line x1="210.3" y1="91.7" x2="210.3" y2="357.5" stroke="#606060" stroke-width="0.8"/>
<line x1="210.3" y1="357.5" x2="584" y2="357.5" stroke="#606060" stroke-width="0.8"/>
<g font-family="Liberation Sans" font-size="5.2" fill="#333"><text x="227.0" y="365" text-anchor="middle">80</text><text x="264.7" y="365" text-anchor="middle">100</text><text x="302.5" y="365" text-anchor="middle">120</text><text x="340.2" y="365" text-anchor="middle">140</text><text x="377.9" y="365" text-anchor="middle">160</text><text x="415.7" y="365" text-anchor="middle">180</text><text x="453.4" y="365" text-anchor="middle">200</text><text x="491.1" y="365" text-anchor="middle">220</text><text x="528.9" y="365" text-anchor="middle">240</text><text x="566.6" y="365" text-anchor="middle">260</text><text x="208" y="347.2" text-anchor="end">7</text><text x="208" y="323.0" text-anchor="end">7.2</text><text x="208" y="298.8" text-anchor="end">7.4</text><text x="208" y="274.6" text-anchor="end">7.6</text><text x="208" y="250.4" text-anchor="end">7.8</text><text x="208" y="226.2" text-anchor="end">8</text><text x="208" y="202.0" text-anchor="end">8.2</text><text x="208" y="177.8" text-anchor="end">8.4</text><text x="208" y="153.6" text-anchor="end">8.6</text><text x="208" y="129.4" text-anchor="end">8.8</text><text x="208" y="105.2" text-anchor="end">9</text></g>
<text x="397" y="88.4" text-anchor="middle" font-family="Liberation Sans" font-weight="bold" font-size="5.7" fill="#111">Young's modulus vs Density vs Price vs Thermal conductivity</text>
<text x="397.2" y="372.2" text-anchor="middle" font-family="Liberation Sans" font-size="5.75" fill="#333">Young's modulus (GPa)</text>
<text transform="translate(198,223.9) rotate(-90)" text-anchor="middle" font-family="Liberation Sans" font-size="5.3" fill="#3a3a3a">Density (Mg/m<tspan dy="-2" font-size="3.6">3</tspan><tspan dy="2">)</tspan></text>
<rect x="589.7" y="91" width="12.8" height="266.4" fill="url(#parula)" stroke="#333" stroke-width="0.6"/>
<g stroke="#262626" stroke-width="0.6"><line x1="602.5" y1="329.6" x2="599.5" y2="329.6" /><line x1="602.5" y1="296.0" x2="599.5" y2="296.0" /><line x1="602.5" y1="262.4" x2="599.5" y2="262.4" /><line x1="602.5" y1="228.8" x2="599.5" y2="228.8" /><line x1="602.5" y1="195.2" x2="599.5" y2="195.2" /><line x1="602.5" y1="161.6" x2="599.5" y2="161.6" /><line x1="602.5" y1="128.0" x2="599.5" y2="128.0" /><line x1="602.5" y1="94.4" x2="599.5" y2="94.4" /></g>
<g font-family="Liberation Sans" font-size="4.8" fill="#505050"><text x="605" y="331.5">20</text><text x="605" y="297.9">30</text><text x="605" y="264.3">40</text><text x="605" y="230.7">50</text><text x="605" y="197.1">60</text><text x="605" y="163.5">70</text><text x="605" y="129.9">80</text><text x="605" y="96.3">90</text></g>
<text transform="translate(616.8,223) rotate(-90)" text-anchor="middle" font-family="Liberation Sans" font-size="4.8" fill="#3a3a3a">Thermal conductivity (W/m.°C)</text>
</svg>
</body></html>
